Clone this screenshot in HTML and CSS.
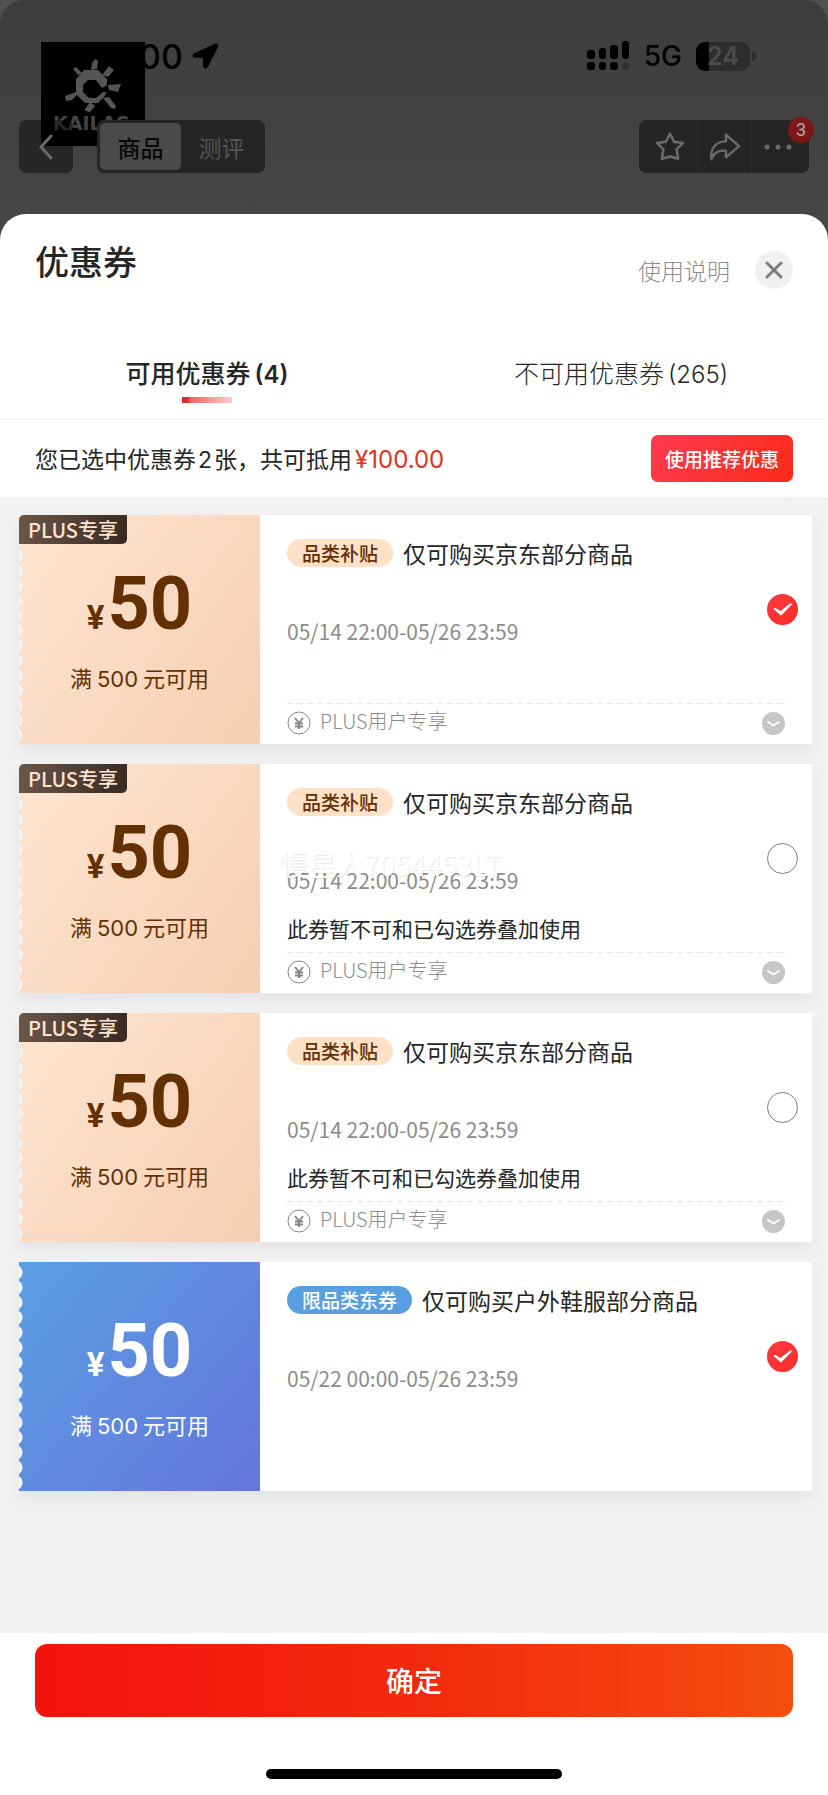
FILE: index.html
```html
<!DOCTYPE html>
<html lang="zh-CN">
<head>
<meta charset="utf-8">
<meta name="viewport" content="width=device-width, initial-scale=1">
<title>优惠券</title>
<link rel="stylesheet" href="styles.css">
</head>
<body>
<div class="screen">
  <header class="backdrop">
    <div class="status">
      <span class="time">00</span>
      <svg class="location" width="28" height="28" viewBox="0 0 28 28" aria-hidden="true"><path d="M25 2.500 3 12.500Q1.500 14 3.500 14.800H13V24.500Q14.500 27 16 24.500L26.200 4Q26.500 2 25 2.500Z" fill="#000" stroke="#000" stroke-width="2" stroke-linejoin="round"/></svg>
      <div class="status-right">
        <svg width="43" height="30" viewBox="0 0 43 30" aria-hidden="true">
          <rect x="0" y="9" width="8" height="9" rx="3"/><rect x="12" y="7" width="7" height="11" rx="3"/><rect x="23" y="4" width="8" height="14" rx="3"/><rect x="35" y="0" width="7" height="18" rx="3"/>
          <rect x="0" y="21" width="8" height="8" rx="3"/><rect x="12" y="21" width="7" height="8" rx="3"/><rect x="23" y="21" width="8" height="8" rx="3"/><rect x="35" y="22" width="7" height="7" rx="3" fill="#333"/>
        </svg>
        <span class="network">5G</span>
        <div class="battery"><span class="battery-body">24</span><span class="battery-nub"></span></div>
      </div>
    </div>
    <svg class="brand" width="104" height="104" viewBox="0 0 104 104" role="img" aria-label="KAILAS">
      <rect width="104" height="104" fill="#000"/>
      <g fill="#555">
        <path fill-rule="evenodd" d="M43 28h14l9 9v6l-5 3-6-8H47l-5 5v7l6 6h7l7-6h4l-3 5-6 6H44l-9-9V37z"/>
        <path d="M54 17l3 2-1 8-6 1 1-7zM32 27l3-2 6 6-4 2zM68 24l5 4-6 7-6-2zM67 43l13-1-3 8-9-2zM24 54l11-4 1 3-5 5-6 1zM62 56l6-1 7 9-1 3-4-1zM44 67l5-7 5 4-5 6-5-1z"/>
      </g>
      <text class="brand-text" x="12" y="88" fill="#454545">KAILAS</text>
    </svg>
    <nav class="navbar">
      <button class="back" type="button" aria-label="返回"><svg width="14" height="26" viewBox="0 0 14 26"><path d="M12 2 2 13l10 11" fill="none" stroke="#6b6b6b" stroke-width="3" stroke-linecap="round" stroke-linejoin="round"/></svg></button>
      <div class="segments">
        <button class="segment segment-on" type="button">商品</button>
        <button class="segment" type="button">测评</button>
      </div>
      <div class="tools">
        <button class="tool tool-star" type="button" aria-label="收藏"><svg width="32" height="32" viewBox="0 0 32 32"><path d="M16 2.500l4 8.200 9 1.200-6.500 6.400 1.600 9.500L16 25.500l-8.100 2.300 1.600-9.500L3 11.900l9-1.200z" class="tool-line"/></svg></button>
        <button class="tool" type="button" aria-label="分享"><svg width="32" height="32" viewBox="0 0 34 32"><path d="M18 3 32 15 18 27V20C10 19 5 22 2.500 29 1 17 8 10 18 10z" class="tool-line"/></svg></button>
        <button class="tool tool-more" type="button" aria-label="更多"><svg width="28" height="6" viewBox="0 0 28 6" fill="#6b6b6b"><circle cx="3" cy="3" r="2.500"/><circle cx="14" cy="3" r="2.500"/><circle cx="25" cy="3" r="2.500"/></svg></button>
        <span class="badge">3</span>
      </div>
    </nav>
  </header>

  <main class="sheet">
    <div class="sheet-head">
      <h1 class="sheet-title">优惠券</h1>
      <div class="sheet-actions">
        <a class="help" href="#help">使用说明</a>
        <button class="close" type="button" aria-label="关闭"><svg width="18" height="18" viewBox="0 0 18 18"><path d="M2 2l14 14M16 2 2 16" stroke="#7d7d7d" stroke-width="3" stroke-linecap="round"/></svg></button>
      </div>
    </div>
    <div class="tabs" role="tablist">
      <button class="tab tab-on" type="button" role="tab" aria-selected="true">可用优惠券<span class="count">(4)</span></button>
      <button class="tab" type="button" role="tab" aria-selected="false">不可用优惠券<span class="count">(265)</span></button>
    </div>
    <div class="summary">
      <p class="summary-text">您已选中优惠券<span class="num">2</span>张，共可抵用<span class="money">¥100.00</span></p>
      <button class="recommend" type="button">使用推荐优惠</button>
    </div>

    <div class="coupons">
      <article class="coupon">
        <div class="value"><span class="plus-tag">PLUS专享</span>
          <div class="amount"><span class="yen">¥</span>50</div>
          <div class="limit">满<span class="limit-num">500</span>元可用</div>
        </div>
        <div class="info">
          <div class="main">
            <div class="details">
              <h2 class="name"><span class="pill">品类补贴</span>仅可购买京东部分商品</h2>
              <div class="date">05/14 22:00-05/26 23:59</div>
            </div>
            <label class="pick"><input type="checkbox" aria-label="选择优惠券 1" checked><svg class="tick" viewBox="0 0 31 31"><path d="M6 14.500l2.500-.5 5 3L23 9.500l2.500.5L14 21.500z"/></svg></label>
          </div>
          <div class="extra">
            <svg class="coin" viewBox="0 0 24 24"><circle cx="12" cy="12" r="11"/><path d="M8 7l4 5 4-5M12 12v6M8 12.500h8M8 15.500h8"/></svg>
            <span class="extra-text">PLUS用户专享</span>
            <button class="expand" type="button" aria-label="展开"><svg viewBox="0 0 23 23"><path d="M6 10l5.500 3.500L17 10"/></svg></button>
          </div>
        </div>
      </article>

      <article class="coupon">
        <div class="value"><span class="plus-tag">PLUS专享</span>
          <div class="amount"><span class="yen">¥</span>50</div>
          <div class="limit">满<span class="limit-num">500</span>元可用</div>
        </div>
        <div class="info">
          <div class="main">
            <div class="details">
              <h2 class="name"><span class="pill">品类补贴</span>仅可购买京东部分商品</h2>
              <div class="date">05/14 22:00-05/26 23:59</div>
              <div class="note">此券暂不可和已勾选券叠加使用</div>
            </div>
            <label class="pick"><input type="checkbox" aria-label="选择优惠券 2"></label>
          </div>
          <div class="extra">
            <svg class="coin" viewBox="0 0 24 24"><circle cx="12" cy="12" r="11"/><path d="M8 7l4 5 4-5M12 12v6M8 12.500h8M8 15.500h8"/></svg>
            <span class="extra-text">PLUS用户专享</span>
            <button class="expand" type="button" aria-label="展开"><svg viewBox="0 0 23 23"><path d="M6 10l5.500 3.500L17 10"/></svg></button>
          </div>
          <span class="watermark">慢星人7054453LT</span>
        </div>
      </article>

      <article class="coupon">
        <div class="value"><span class="plus-tag">PLUS专享</span>
          <div class="amount"><span class="yen">¥</span>50</div>
          <div class="limit">满<span class="limit-num">500</span>元可用</div>
        </div>
        <div class="info">
          <div class="main">
            <div class="details">
              <h2 class="name"><span class="pill">品类补贴</span>仅可购买京东部分商品</h2>
              <div class="date">05/14 22:00-05/26 23:59</div>
              <div class="note">此券暂不可和已勾选券叠加使用</div>
            </div>
            <label class="pick"><input type="checkbox" aria-label="选择优惠券 3"></label>
          </div>
          <div class="extra">
            <svg class="coin" viewBox="0 0 24 24"><circle cx="12" cy="12" r="11"/><path d="M8 7l4 5 4-5M12 12v6M8 12.500h8M8 15.500h8"/></svg>
            <span class="extra-text">PLUS用户专享</span>
            <button class="expand" type="button" aria-label="展开"><svg viewBox="0 0 23 23"><path d="M6 10l5.500 3.500L17 10"/></svg></button>
          </div>
        </div>
      </article>

      <article class="coupon coupon-blue">
        <div class="value">
          <div class="amount"><span class="yen">¥</span>50</div>
          <div class="limit">满<span class="limit-num">500</span>元可用</div>
        </div>
        <div class="info">
          <div class="main">
            <div class="details">
              <h2 class="name"><span class="pill">限品类东券</span>仅可购买户外鞋服部分商品</h2>
              <div class="date">05/22 00:00-05/26 23:59</div>
            </div>
            <label class="pick"><input type="checkbox" aria-label="选择优惠券 4" checked><svg class="tick" viewBox="0 0 31 31"><path d="M6 14.500l2.500-.5 5 3L23 9.500l2.500.5L14 21.500z"/></svg></label>
          </div>
        </div>
      </article>
    </div>

    <footer class="confirm-bar">
      <button class="confirm" type="button">确定</button>
      <div class="home-indicator"></div>
    </footer>
  </main>
</div>
</body>
</html>
```

FILE: styles.css
```css
* { box-sizing: border-box; }
body { margin: 0; background: #505050; color: #262626; font-family: "Noto Sans CJK SC", sans-serif; }
button { border: 0; padding: 0; margin: 0; background: none; color: inherit; font: inherit; }
svg { display: block; }
h1, h2, p { margin: 0; font-weight: 400; }

.screen { display: flex; flex-direction: column; min-height: 100vh; background: linear-gradient(#3d3d3d, #464646 214px); border-radius: 24px 24px 0 0; }

/* dimmed page behind the sheet */
.backdrop { position: relative; padding: 38px 19px 41px; }
.status { display: flex; align-items: center; height: 36px; padding: 0 53px 0 120px; color: #000; font-family: Inter, sans-serif; }
.time { font-size: 34px; font-weight: 500; }
.location { margin-left: 8px; }
.status-right { display: flex; align-items: center; gap: 14px; margin-left: auto; }
.network { font-size: 28px; font-weight: 500; }
.battery { display: flex; align-items: center; gap: 2px; }
.battery-body { width: 54px; height: 29px; border-radius: 9px; background: linear-gradient(90deg, #000 13px, #2d2d2d 13px); color: #4b4b4b; font-size: 25px; font-weight: 600; line-height: 29px; text-align: center; }
.battery-nub { width: 4px; height: 9px; border-radius: 0 4px 4px 0; background: #2d2d2d; }
.brand { position: absolute; left: 41px; top: 42px; }
.brand-text { font: 700 19px "DejaVu Sans", sans-serif; }
.navbar { position: relative; display: flex; height: 53px; margin-top: 46px; }
.back { display: flex; align-items: center; justify-content: center; width: 54px; border-radius: 7px; background: rgba(0, 0, 0, .42); }
.segments { display: flex; margin-left: 24px; padding: 3px; border-radius: 7px; background: #252525; }
.segment { width: 81px; border-radius: 5px; color: #555; font-size: 23px; line-height: 36px; }
.segment-on { background: #4a4a4a; color: #080808; font-weight: 500; }
.tools { position: relative; display: grid; grid-template-columns: 58px 54px 58px; margin-left: auto; border-radius: 7px; background: #252525; }
.tool { display: flex; align-items: center; justify-content: center; }
.tool + .tool { border-left: 1px solid #2b2b2b; }
.tool-star { padding-left: 4px; }
.tool-more { padding-right: 6px; }
.tool-line { fill: none; stroke: #6b6b6b; stroke-width: 2.5px; stroke-linejoin: round; }
.badge { position: absolute; right: -5px; top: -3px; width: 26px; height: 26px; border-radius: 50%; background: #7e1717; color: #aaa; font: 18px/26px Roboto, sans-serif; text-align: center; }

/* coupon sheet */
.sheet { display: flex; flex: 1; flex-direction: column; overflow: hidden; border-radius: 26px 26px 0 0; background: #fff; }
.sheet-head { display: flex; justify-content: space-between; padding: 24px 35px 0; }
.sheet-title { font-size: 34px; font-weight: 500; line-height: 46px; }
.sheet-actions { display: flex; align-items: center; gap: 25px; margin-top: 13px; }
.help { color: #8c8c8c; font-size: 23px; font-weight: 300; line-height: 34px; text-decoration: none; }
.close { display: grid; place-items: center; width: 38px; height: 38px; border-radius: 50%; background: #f0f0f0; }
.tabs { display: grid; grid-template-columns: 1fr 1fr; border-bottom: 1px solid #f2f2f2; }
.tab { display: flex; flex-wrap: wrap; align-items: baseline; justify-content: center; padding: 65px 0 16px; font-size: 25px; font-weight: 300; line-height: 36px; }
.tab::after { content: ""; flex: 0 0 100%; height: 6px; margin-top: 4px; background: linear-gradient(90deg, #d92c26 7px, #ee6159 7px, #f7cfcf) center / 50px 6px no-repeat; visibility: hidden; }
.tab-on { font-weight: 500; }
.tab-on::after { visibility: visible; }
.count { margin-left: 4px; font-family: Inter, sans-serif; font-size: 24px; }
.tab-on .count { font-weight: 600; }
.summary { display: flex; align-items: center; justify-content: space-between; padding: 15px 35px; }
.summary-text { font-size: 23px; line-height: 36px; }
.num { margin: 0 2px; font-family: Inter, sans-serif; }
.money { margin-left: 3px; color: #e1301e; font-family: Inter, sans-serif; font-size: 24px; }
.recommend { padding: 0 14px; border-radius: 7px; background: linear-gradient(120deg, #ff3a50, #fb2b18); color: #fff; font-size: 19px; font-weight: 500; line-height: 47px; }

.coupons { display: flex; flex: 1; flex-direction: column; gap: 20px; padding: 18px 16px 20px 19px; background: #f1f1f1; }
.coupon { display: grid; grid-template-columns: 241px 1fr; min-height: 229px; box-shadow: 0 8px 14px rgba(0, 0, 0, .05); }
.value { position: relative; padding-top: 53px; background: linear-gradient(125deg, #fee6d2, #f5ceb2); color: #633003; text-align: center; }
.value::before { content: ""; position: absolute; left: 0; top: 3px; bottom: 0; width: 5px; background: radial-gradient(circle at -4px 50%, #f2f2f2 7px, transparent 8px) 0 0 / 5px 15px; }
.plus-tag { position: absolute; left: 0; top: 0; padding: 0 9px; border-radius: 5px 0 5px 0; background: linear-gradient(100deg, #6b5748, #382a22); color: #fee4cf; font-size: 20px; font-weight: 500; line-height: 29px; }
.amount { font: 700 74px/72px Roboto, sans-serif; }
.yen { margin-right: 3px; font-size: 33px; }
.limit { margin-top: 6px; font-size: 22px; line-height: 34px; }
.limit-num { margin: 0 5px; font-family: Inter, sans-serif; }
.info { position: relative; display: flex; flex-direction: column; background: #fff; }
.main { display: flex; align-items: center; height: 188px; padding: 0 14px 0 27px; }
.details { flex: 1; align-self: stretch; padding-top: 24px; }
.name { display: flex; align-items: center; gap: 10px; font-size: 23px; line-height: 28px; }
.pill { padding: 0 15px; border-radius: 14px; background: #ffe1c8; color: #633003; font-size: 19px; font-weight: 500; line-height: 28px; }
.date { margin-top: 50px; color: #8c8c8c; font-size: 21px; line-height: 28px; }
.note { margin-top: 20px; font-size: 21px; line-height: 28px; }
.pick { display: grid; flex: none; }
.pick input { grid-area: 1 / 1; appearance: none; width: 31px; height: 31px; margin: 0; border: 1px solid #7d7d7d; border-radius: 50%; background: #fff; }
.pick input:checked { border: 0; background: linear-gradient(135deg, #ff3a40, #fa2c28); }
.tick { grid-area: 1 / 1; width: 31px; height: 31px; fill: #fff; }
.extra { display: flex; align-items: center; height: 40px; margin: 0 24px 0 27px; padding-right: 3px; background: repeating-linear-gradient(90deg, #e6e6e6 0 6px, transparent 6px 10px) top / 100% 1px no-repeat; color: #8c8c8c; }
.coin { width: 24px; height: 24px; fill: none; stroke: #858585; stroke-width: 1px; }
.coin path { stroke-width: 2px; }
.extra-text { margin-left: 9px; padding-bottom: 4px; font-size: 20px; line-height: 28px; font-weight: 300; }
.expand { width: 23px; height: 23px; margin-left: auto; border-radius: 50%; background: #c6c6c6; }
.expand path { fill: none; stroke: #fff; stroke-width: 2px; stroke-linecap: round; stroke-linejoin: round; }
.watermark { position: absolute; left: 20px; top: 80px; color: #fff; font-size: 28px; line-height: 40px; text-shadow: 1px 1px 1px rgba(0, 0, 0, .1); white-space: nowrap; }

.coupon-blue .value { background: linear-gradient(130deg, #5a9fe2, #6575dc); color: #fff; }
.coupon-blue .value::before { background-image: radial-gradient(circle at -4px 50%, #f0f6fc 7px, transparent 8px); }
.coupon-blue .pill { background: #599fe0; color: #fff; }

.confirm-bar { padding: 11px 35px 16px; }
.confirm { display: block; width: 100%; border-radius: 12px; background: linear-gradient(90deg, #f3130e, #f3290e 50%, #f44e0e); color: #fff; font-size: 28px; font-weight: 500; line-height: 73px; }
.home-indicator { width: 296px; height: 10px; margin: 52px auto 0; border-radius: 5px; background: #000; }
```
